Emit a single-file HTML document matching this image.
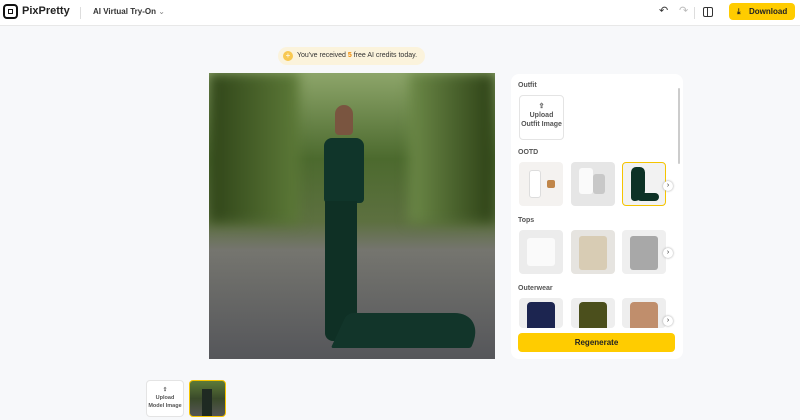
<!DOCTYPE html><html><head><style>
*{margin:0;padding:0;box-sizing:border-box}
body{width:800px;height:420px;background:#f7f8fa;font-family:"Liberation Sans",sans-serif;position:relative;overflow:hidden;color:#222}
.hdr{position:absolute;left:0;top:0;width:800px;height:26px;background:#fff;border-bottom:1px solid #e8e8e8}
.a{position:absolute}
.th{position:absolute;width:44px;height:44px;border-radius:4px;background:#eee;overflow:hidden}
.lbl{position:absolute;font-size:7px;color:#555;font-weight:bold}
.arr{position:absolute;width:10px;height:10px;border-radius:50%;background:#fff;box-shadow:0 0 2px #999;font-size:7px;text-align:center;line-height:10px}
</style></head><body>
<div class="hdr">
 <div class="a" style="left:3px;top:4px;width:15px;height:15px;border:2px solid #111;border-radius:4px"><div class="a" style="left:3px;top:3px;width:5px;height:5px;border:1.5px solid #111"></div></div>
 <div class="a" style="left:22px;top:5px;font-size:11px;font-weight:bold">PixPretty</div>
 <div class="a" style="left:80px;top:7px;width:1px;height:12px;background:#ddd"></div>
 <div class="a" style="left:93px;top:7px;font-size:8px;font-weight:bold;color:#333">AI Virtual Try-On <span style="color:#888;font-weight:normal">⌄</span></div>
 <div class="a" style="left:659px;top:4px;font-size:11px;color:#333">↶</div>
 <div class="a" style="left:679px;top:4px;font-size:11px;color:#bbb">↷</div>
 <div class="a" style="left:694px;top:7px;width:1px;height:12px;background:#ddd"></div>
 <div class="a" style="left:703px;top:7px;width:10px;height:10px;border:1.3px solid #333;border-radius:2px"><div class="a" style="left:3px;top:-1px;width:1.3px;height:10px;background:#333"></div></div>
 <div class="a" style="left:729px;top:3px;width:66px;height:17px;background:#ffcc00;border-radius:4px;font-size:8px;font-weight:bold;line-height:17px;padding-left:20px">Download<span class="a" style="left:8px;top:0;font-size:8px">⤓</span></div>
</div>
<div class="a" style="left:278px;top:47px;width:147px;height:18px;background:#fbf3dc;border-radius:9px;font-size:7px;line-height:18px;padding-left:19px;color:#333">You've received <b style="color:#f08a00">5</b> free AI credits today.<div class="a" style="left:5px;top:4px;width:10px;height:10px;border-radius:50%;background:#f8c850;color:#fff;font-size:8px;line-height:10px;text-align:center">+</div></div>
<div class="a" style="left:209px;top:73px;width:286px;height:286px;overflow:hidden;background:linear-gradient(180deg,#8da56a 0%,#4c6a2e 30%,#5d7040 52%,#75756f 62%,#55565a 100%)">
 <div class="a" style="left:0;top:0;width:90px;height:150px;background:linear-gradient(90deg,#2f4418,#5d7a38);filter:blur(6px)"></div>
 <div class="a" style="left:200px;top:0;width:86px;height:150px;background:linear-gradient(90deg,#6d8a48,#2c4015);filter:blur(6px)"></div>
 <div class="a" style="left:126px;top:32px;width:18px;height:30px;background:#7a5540;border-radius:9px 9px 4px 4px"></div>
 <div class="a" style="left:115px;top:65px;width:40px;height:65px;background:#10352a;border-radius:8px 8px 4px 4px"></div>
 <div class="a" style="left:116px;top:128px;width:32px;height:140px;background:#0f3025;border-radius:0 0 8px 8px"></div>
 <div class="a" style="left:130px;top:240px;width:140px;height:35px;background:#12352a;border-radius:10px 60px 4px 4px;transform:skewX(-25deg)"></div>
</div>
<div class="a" style="left:511px;top:74px;width:172px;height:285px;background:#fff;border-radius:8px">
 <div class="a" style="left:167px;top:14px;width:2px;height:76px;background:#ccc;border-radius:1px"></div>
 <div class="lbl" style="left:7px;top:8px">Outfit</div>
 <div class="a" style="left:8px;top:21px;width:45px;height:45px;border:1px solid #e4e4e4;border-radius:4px;text-align:center;font-size:7px;font-weight:bold;color:#555;line-height:9px;padding-top:6px">⇪<br>Upload<br>Outfit Image</div>
 <div class="lbl" style="left:7px;top:75px">OOTD</div>
 <div class="th" style="left:8px;top:88px;background:#f4f2f0"><div class="a" style="left:10px;top:8px;width:12px;height:28px;background:#fff;border:1px solid #ddd;border-radius:3px"></div><div class="a" style="left:28px;top:18px;width:8px;height:8px;background:#c0864a;border-radius:2px"></div></div>
 <div class="th" style="left:60px;top:88px;background:#e6e6e6"><div class="a" style="left:8px;top:6px;width:14px;height:26px;background:#fafafa;border-radius:3px"></div><div class="a" style="left:22px;top:12px;width:12px;height:20px;background:#c8c8c8;border-radius:3px"></div></div>
 <div class="th" style="left:111px;top:88px;background:#f2f2f2;border:1.5px solid #f5c400"><div class="a" style="left:8px;top:4px;width:14px;height:34px;background:#0d3226;border-radius:6px 6px 12px 4px"></div><div class="a" style="left:14px;top:30px;width:22px;height:8px;background:#0d3226;border-radius:6px"></div></div>
 <div class="arr" style="left:152px;top:107px">›</div>
 <div class="lbl" style="left:7px;top:143px">Tops</div>
 <div class="th" style="left:8px;top:156px;background:#ececec"><div class="a" style="left:8px;top:8px;width:28px;height:28px;background:#fafafa;border-radius:3px"></div></div>
 <div class="th" style="left:60px;top:156px;background:#e6e4e0"><div class="a" style="left:8px;top:6px;width:28px;height:34px;background:#d8ccb4;border-radius:3px"></div></div>
 <div class="th" style="left:111px;top:156px;background:#efefef"><div class="a" style="left:8px;top:6px;width:28px;height:34px;background:#a8a8a8;border-radius:3px"></div></div>
 <div class="arr" style="left:152px;top:174px">›</div>
 <div class="lbl" style="left:7px;top:211px">Outerwear</div>
 <div class="th" style="left:8px;top:224px;height:30px;background:#eee"><div class="a" style="left:8px;top:4px;width:28px;height:30px;background:#1c2550;border-radius:4px"></div></div>
 <div class="th" style="left:60px;top:224px;height:30px;background:#eee"><div class="a" style="left:8px;top:4px;width:28px;height:30px;background:#4b4f1c;border-radius:4px"></div></div>
 <div class="th" style="left:111px;top:224px;height:30px;background:#eee"><div class="a" style="left:8px;top:4px;width:28px;height:30px;background:#c08e6c;border-radius:4px"></div></div>
 <div class="arr" style="left:152px;top:242px">›</div>
 <div class="a" style="left:7px;top:259px;width:157px;height:19px;background:#ffcc00;border-radius:4px;text-align:center;font-size:8px;font-weight:bold;line-height:19px">Regenerate</div>
</div>
<div class="a" style="left:146px;top:380px;width:38px;height:37px;background:#fff;border:1px solid #e4e4e4;border-radius:4px;text-align:center;font-size:5.5px;font-weight:bold;color:#555;line-height:8px;padding-top:5px;white-space:nowrap">⇪<br>Upload<br>Model Image</div>
<div class="a" style="left:189px;top:380px;width:37px;height:37px;border:1.5px solid #f5c400;border-radius:4px;background:linear-gradient(180deg,#5d7a38,#3a4a2a 50%,#555 100%);overflow:hidden"><div class="a" style="left:12px;top:8px;width:10px;height:28px;background:#1f2a22"></div></div>
</body></html>
